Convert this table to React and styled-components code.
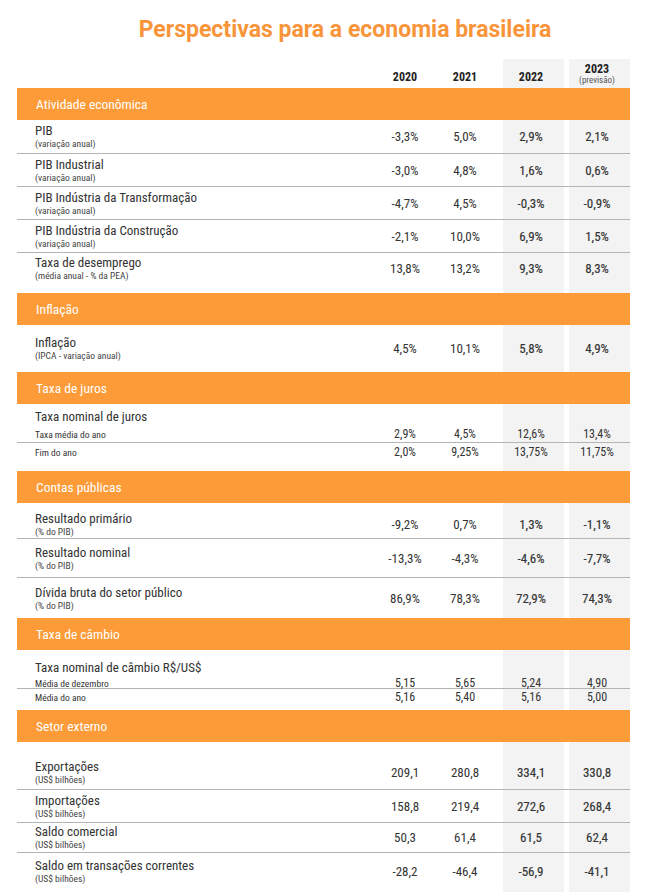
import React from "react";
import styled, { createGlobalStyle } from "styled-components";

const COND = `"Roboto Condensed", Roboto, "Liberation Sans", sans-serif`;

const Global = createGlobalStyle`
  html, body { margin: 0; padding: 0; background: #ffffff; }
  body { font-family: ${COND}; color: #333; }
`;

const Page = styled.div`
  width: 648px;
  box-sizing: border-box;
  padding: 16px 18px 2px 17px;
`;

const Title = styled.h1`
  margin: 0 0 15px;
  padding-left: 43px;
  font-family: Roboto, "Liberation Sans", sans-serif;
  font-weight: 700;
  font-size: 23px;
  line-height: 28px;
  color: #f8953a;
  text-align: center;
`;

const Table = styled.div`
  font-stretch: condensed;
  background: linear-gradient(
    to right,
    transparent 486px,
    #f3f3f3 486px,
    #f3f3f3 547px,
    transparent 547px,
    transparent 552px,
    #f3f3f3 552px
  );
`;

const GRID = "1fr 60px 60px 72px 60px";

const HeaderRow = styled.div`
  display: grid;
  grid-template-columns: ${GRID};
  padding-right: 3px;
  height: 29px;
  box-sizing: border-box;
  align-items: end;
  padding-bottom: 3px;
`;

const Year = styled.div`
  text-align: center;
  font-weight: 700;
  font-size: 12px;
  line-height: 16px;
  color: #222;
`;

const YearStack = styled.div`
  display: flex;
  flex-direction: column;
  align-items: center;
  font-weight: 700;
  font-size: 12px;
  line-height: 12px;
  color: #222;
`;

const Previsao = styled.span`
  font-weight: 400;
  font-size: 9px;
  line-height: 10px;
  color: #555;
`;

const Bar = styled.div`
  height: 32px;
  background: #fd9b38;
  color: #ffffff;
  display: flex;
  align-items: center;
  padding-left: 19px;
  font-size: 13.5px;
  font-weight: 400;
`;

const Body = styled.div`
  padding-top: ${(p) => p.$pt}px;
  padding-bottom: ${(p) => p.$pb}px;
`;

const Row = styled.div`
  display: grid;
  grid-template-columns: ${GRID};
  padding-right: 3px;
  align-items: center;
  height: ${(p) => p.$h}px;
  box-sizing: border-box;
  border-bottom: ${(p) => (p.$line ? "1px solid #b4b4b4" : "0")};
`;

const LabelBlock = styled.div`
  padding-left: 18px;
  display: flex;
  flex-direction: column;
`;

const Label = styled.span`
  font-size: 13px;
  line-height: 14px;
  color: #333;
`;

const Sub = styled.span`
  font-size: 9.5px;
  line-height: 11px;
  color: #444;
`;

const Value = styled.div`
  text-align: center;
  font-size: 13px;
  font-weight: 400;
  color: #333;
  -webkit-text-stroke: ${(p) => (p.$strong ? "0.15px #333" : "0")};
`;

const Heading = styled.div`
  padding: ${(p) => p.$pt}px 0 0 18px;
  font-size: 13px;
  line-height: 20px;
  color: #333;
`;

const SubLabel = styled.div`
  padding-left: 18px;
  font-size: 9.5px;
  line-height: 11px;
  color: #333;
`;

const SubValue = styled.div`
  text-align: center;
  font-size: 12px;
  line-height: 11px;
  color: #333;
`;

const DATA = [
  {
    title: "Atividade econômica",
    pt: 0,
    pb: 10,
    rows: [
      { label: "PIB", sub: "(variação anual)", v: ["-3,3%", "5,0%", "2,9%", "2,1%"], h: 34, line: true },
      { label: "PIB Industrial", sub: "(variação anual)", v: ["-3,0%", "4,8%", "1,6%", "0,6%"], h: 33, line: true },
      { label: "PIB Indústria da Transformação", sub: "(variação anual)", v: ["-4,7%", "4,5%", "-0,3%", "-0,9%"], h: 33, line: true },
      { label: "PIB Indústria da Construção", sub: "(variação anual)", v: ["-2,1%", "10,0%", "6,9%", "1,5%"], h: 33, line: true },
      { label: "Taxa de desemprego", sub: "(média anual - % da PEA)", v: ["13,8%", "13,2%", "9,3%", "8,3%"], h: 30 },
    ],
  },
  {
    title: "Inflação",
    pt: 0,
    pb: 0,
    rows: [{ label: "Inflação", sub: "(IPCA - variação anual)", v: ["4,5%", "10,1%", "5,8%", "4,9%"], h: 47 }],
  },
  {
    title: "Taxa de juros",
    pt: 0,
    pb: 9,
    heading: "Taxa nominal de juros",
    hpt: 3,
    subs: [
      { label: "Taxa média do ano", v: ["2,9%", "4,5%", "12,6%", "13,4%"], h: 16, line: true },
      { label: "Fim do ano", v: ["2,0%", "9,25%", "13,75%", "11,75%"], h: 19 },
    ],
  },
  {
    title: "Contas públicas",
    pt: 7,
    pb: 0,
    rows: [
      { label: "Resultado primário", sub: "(% do PIB)", v: ["-9,2%", "0,7%", "1,3%", "-1,1%"], h: 29, line: true },
      { label: "Resultado nominal", sub: "(% do PIB)", v: ["-13,3%", "-4,3%", "-4,6%", "-7,7%"], h: 39, line: true },
      { label: "Dívida bruta do setor público", sub: "(% do PIB)", v: ["86,9%", "78,3%", "72,9%", "74,3%"], h: 40 },
    ],
  },
  {
    title: "Taxa de câmbio",
    pt: 0,
    pb: 5,
    heading: "Taxa nominal de câmbio R$/US$",
    hpt: 8,
    subs: [
      { label: "Média de dezembro", v: ["5,15", "5,65", "5,24", "4,90"], h: 11, line: true },
      { label: "Média do ano", v: ["5,16", "5,40", "5,16", "5,00"], h: 16 },
    ],
  },
  {
    title: "Setor externo",
    pt: 14,
    pb: 3,
    rows: [
      { label: "Exportações", sub: "(US$ bilhões)", v: ["209,1", "280,8", "334,1", "330,8"], h: 34, line: true },
      { label: "Importações", sub: "(US$ bilhões)", v: ["158,8", "219,4", "272,6", "268,4"], h: 33, line: true },
      { label: "Saldo comercial", sub: "(US$ bilhões)", v: ["50,3", "61,4", "61,5", "62,4"], h: 30, line: true },
      { label: "Saldo em transações correntes", sub: "(US$ bilhões)", v: ["-28,2", "-46,4", "-56,9", "-41,1"], h: 36 },
    ],
  },
];

function Section({ s }) {
  return (
    <>
      <Bar>{s.title}</Bar>
      <Body $pt={s.pt} $pb={s.pb}>
        {s.rows &&
          s.rows.map((r) => (
            <Row key={r.label} $h={r.h} $line={r.line}>
              <LabelBlock>
                <Label>{r.label}</Label>
                <Sub>{r.sub}</Sub>
              </LabelBlock>
              {r.v.map((v, i) => (
                <Value key={i} $strong={i >= 2}>
                  {v}
                </Value>
              ))}
            </Row>
          ))}
        {s.heading && <Heading $pt={s.hpt}>{s.heading}</Heading>}
        {s.subs &&
          s.subs.map((r) => (
            <Row key={r.label} $h={r.h} $line={r.line}>
              <SubLabel>{r.label}</SubLabel>
              {r.v.map((v, i) => (
                <SubValue key={i}>{v}</SubValue>
              ))}
            </Row>
          ))}
      </Body>
    </>
  );
}

export default function App() {
  return (
    <Page>
      <Global />
      <Title>Perspectivas para a economia brasileira</Title>
      <Table>
        <HeaderRow>
          <div />
          <Year>2020</Year>
          <Year>2021</Year>
          <Year>2022</Year>
          <YearStack>
            2023
            <Previsao>(previsão)</Previsao>
          </YearStack>
        </HeaderRow>
        {DATA.map((s) => (
          <Section key={s.title} s={s} />
        ))}
      </Table>
    </Page>
  );
}
